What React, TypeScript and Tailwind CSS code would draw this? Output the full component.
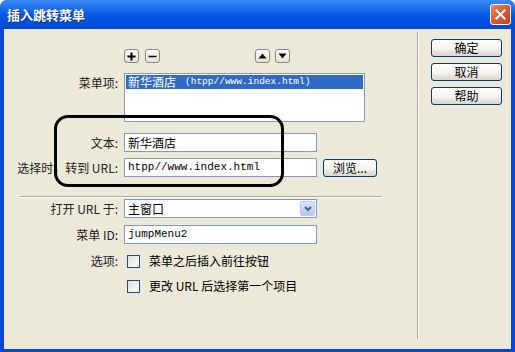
import React from 'react'

// small square tool button (+ / - / up / down)
const ToolButton = ({ children }: { children: React.ReactNode }) => (
  <div className="flex h-[14px] w-[15px] items-center justify-center rounded-[3px] border border-[#8C8A80] bg-linear-to-b from-white to-[#E3E1D6]">
    {children}
  </div>
)

const XpButton = ({ label, className = '' }: { label: string; className?: string }) => (
  <div
    className={`flex items-center justify-center rounded-[3px] border border-[#003C74] bg-linear-to-b from-white via-[#F5F4EF] to-[#D9D6CB] text-[12px] leading-none text-black ${className}`}
  >
    {label}
  </div>
)

const Checkbox = () => (
  <div className="h-[13px] w-[13px] border border-[#1C5180] bg-linear-to-br from-[#DCDCD7] to-white" />
)

const Label = ({ children }: { children: React.ReactNode }) => (
  <div className="w-[114px] shrink-0 text-right text-[12px] leading-none text-[#222]">{children}</div>
)

const inputCls =
  'flex h-[19px] items-center border border-[#7F9DB9] bg-white pl-[3px] text-[12px] leading-none text-black'

export default function App() {
  return (
    <div className="flex h-[352px] w-[515px] flex-col overflow-hidden rounded-t-[7px] bg-[#0A46D8] font-['Noto_Sans_CJK_SC',sans-serif]">
      {/* title bar */}
      <div className="flex h-[29px] shrink-0 items-center justify-between bg-linear-to-b from-[#3D8BF7] via-[#0359E6] to-[#0349D4] pl-[7px] pr-[4px]">
        <span className="text-[13px] font-bold text-white [text-shadow:1px_1px_0_#0A2A80]">插入跳转菜单</span>
        <div className="flex h-[21px] w-[21px] items-center justify-center rounded-[3px] border border-white bg-linear-to-br from-[#E8866A] via-[#D95A36] to-[#C2401E]">
          <svg width="11" height="11" viewBox="0 0 11 11">
            <path d="M1.5 1.5 L9.5 9.5 M9.5 1.5 L1.5 9.5" stroke="white" strokeWidth="2" strokeLinecap="square" />
          </svg>
        </div>
      </div>

      {/* body */}
      <div className="mx-[4px] mb-[3px] flex flex-1 bg-[#ECE9D8]">
        {/* left form */}
        <div className="relative flex w-[413px] flex-col pt-[20px]">
          {/* add/remove/up/down */}
          <div className="flex h-[14px] items-center">
            <div className="w-[120px] shrink-0" />
            <ToolButton>
              <svg width="9" height="9" viewBox="0 0 9 9">
                <path d="M4.5 0.5 V8.5 M0.5 4.5 H8.5" stroke="black" strokeWidth="2" />
              </svg>
            </ToolButton>
            <div className="ml-[6px]">
              <ToolButton>
                <svg width="9" height="9" viewBox="0 0 9 9">
                  <path d="M0.5 4.5 H8.5" stroke="black" strokeWidth="1.5" />
                </svg>
              </ToolButton>
            </div>
            <div className="ml-[95px]">
              <ToolButton>
                <svg width="9" height="6" viewBox="0 0 9 6">
                  <path d="M4.5 0.5 L8.5 5.5 H0.5 Z" fill="black" />
                </svg>
              </ToolButton>
            </div>
            <div className="ml-[5px]">
              <ToolButton>
                <svg width="9" height="6" viewBox="0 0 9 6">
                  <path d="M0.5 0.5 H8.5 L4.5 5.5 Z" fill="black" />
                </svg>
              </ToolButton>
            </div>
          </div>

          {/* menu items list */}
          <div className="mt-[10px] flex">
            <Label>
              <div className="pt-[4px]">菜单项:</div>
            </Label>
            <div className="ml-[6px] h-[49px] w-[241px] border border-[#7F9DB9] bg-white p-[1px]">
              <div className="flex h-[14px] items-center bg-[#316AC5] pl-[2px] text-white">
                <span className="text-[12px] leading-none">新华酒店</span>
                <span className="ml-[9px] font-['Liberation_Mono',monospace] text-[9.5px] leading-none">(htpp//www.index.html)</span>
              </div>
            </div>
          </div>

          {/* text */}
          <div className="mt-[11px] flex items-center">
            <Label>文本:</Label>
            <div className={`ml-[6px] w-[193px] ${inputCls}`}>新华酒店</div>
          </div>

          {/* url */}
          <div className="mt-[6px] flex items-center">
            <Label>选择时，转到 URL:</Label>
            <div className={`ml-[6px] w-[193px] font-['Liberation_Mono',monospace] text-[11px]! ${inputCls}`}>
              htpp//www.index.html
            </div>
            <XpButton label="浏览..." className="ml-[6px] h-[18px] w-[54px]" />
          </div>

          {/* separator */}
          <div className="mt-[19px] ml-[16px] w-[361px] border-t border-b border-t-[#ACA899] border-b-white" />

          {/* open url in */}
          <div className="mt-[1px] flex items-center">
            <Label>打开 URL 于:</Label>
            <div className="ml-[6px] flex h-[19px] w-[193px] items-center justify-between border border-[#7F9DB9] bg-white pl-[3px] pr-[1px] text-[12px] leading-none">
              <span>主窗口</span>
              <div className="flex h-[15px] w-[15px] items-center justify-center rounded-[2px] border border-[#B9CBF3] bg-linear-to-b from-[#DCE6FD] to-[#B4C8F5]">
                <svg width="8" height="6" viewBox="0 0 8 6">
                  <path d="M1 1 L4 4 L7 1" stroke="#4D6185" strokeWidth="2" fill="none" />
                </svg>
              </div>
            </div>
          </div>

          {/* menu id */}
          <div className="mt-[7px] flex items-center">
            <Label>菜单 ID:</Label>
            <div className={`ml-[6px] w-[193px] font-['Liberation_Mono',monospace] text-[11px]! ${inputCls}`}>jumpMenu2</div>
          </div>

          {/* options */}
          <div className="mt-[9px] flex h-[16px] items-center">
            <Label>选项:</Label>
            <div className="ml-[9px]">
              <Checkbox />
            </div>
            <span className="ml-[9px] text-[12px] leading-none text-black">菜单之后插入前往按钮</span>
          </div>
          <div className="mt-[9px] flex h-[16px] items-center">
            <div className="w-[114px] shrink-0" />
            <div className="ml-[9px]">
              <Checkbox />
            </div>
            <span className="ml-[9px] text-[12px] leading-none text-black">更改 URL 后选择第一个项目</span>
          </div>

          {/* annotation */}
          <div className="absolute left-[50px] top-[86px] h-[72px] w-[230px] rounded-[14px] border-[3px] border-black" />
        </div>

        {/* vertical separator */}
        <div className="mt-[3px] mb-[10px] w-[2px] border-l border-r border-l-[#ACA899] border-r-white" />

        {/* right buttons */}
        <div className="ml-[12px] flex flex-col gap-[6px] pt-[10px]">
          <XpButton label="确定" className="h-[18px] w-[71px]" />
          <XpButton label="取消" className="h-[18px] w-[71px]" />
          <XpButton label="帮助" className="h-[18px] w-[71px]" />
        </div>
      </div>
    </div>
  )
}
